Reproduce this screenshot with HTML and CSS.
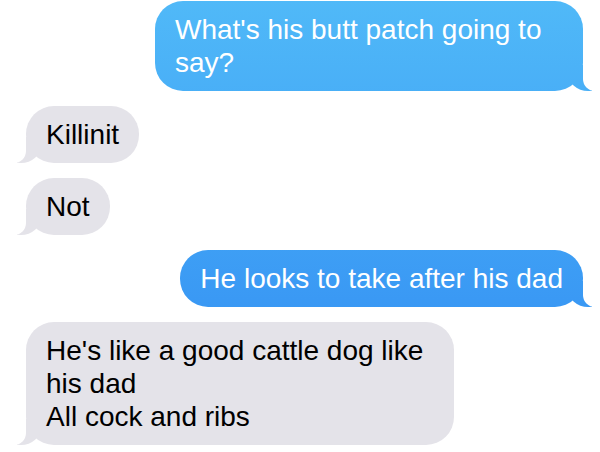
FILE: index.html
```html
<!DOCTYPE html>
<html>
<head>
<meta charset="utf-8">
<link rel="stylesheet" href="styles.css">
</head>
<body>
<div class="thread">
  <div class="bubble sent">What's his butt patch going to say?</div>
  <div class="bubble received">Killinit</div>
  <div class="bubble received">Not</div>
  <div class="bubble sent">He looks to take after his dad</div>
  <div class="bubble received">He's like a good cattle dog like his dad<br>All cock and ribs</div>
</div>
</body>
</html>
```
FILE: styles.css
```css
html, body {
  margin: 0;
  padding: 0;
  background: #ffffff;
}

.thread {
  display: flex;
  flex-direction: column;
  gap: 15px;
  padding: 1px 17px 0 26px;
  font-family: "Liberation Sans", Arial, sans-serif;
  font-size: 28px;
  line-height: 33px;
}

.bubble {
  position: relative;
  max-width: 428px;
  box-sizing: border-box;
  padding: 12px 20px;
  border-radius: 28px;
}

.sent {
  align-self: flex-end;
  color: #ffffff;
  background: linear-gradient(to bottom, #50b9f8 0px, #3a99f4 300px, #2f8af2 452px);
  background-attachment: fixed;
}

.received {
  align-self: flex-start;
  color: #000000;
  background: #e4e3e9;
}

.bubble::before,
.bubble::after {
  content: "";
  position: absolute;
  bottom: 0;
  height: 26px;
}

.sent::before {
  right: -9px;
  width: 24px;
  background: inherit;
  background-attachment: fixed;
  border-bottom-left-radius: 20px 18px;
}

.sent::after {
  right: -30px;
  width: 30px;
  background: #ffffff;
  border-bottom-left-radius: 12px;
}

.received::before {
  left: -9px;
  width: 24px;
  background: #e4e3e9;
  border-bottom-right-radius: 20px 18px;
}

.received::after {
  left: -30px;
  width: 30px;
  background: #ffffff;
  border-bottom-right-radius: 12px;
}
```
